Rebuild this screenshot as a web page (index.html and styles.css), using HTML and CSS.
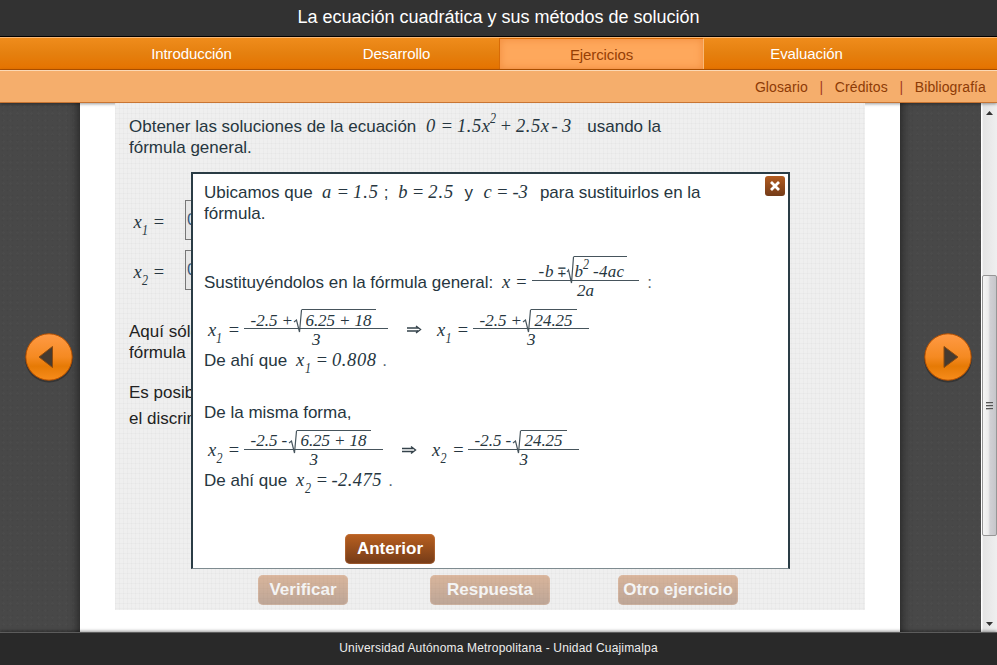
FILE: index.html
```html
<!DOCTYPE html>
<html lang="es">
<head>
<meta charset="utf-8">
<title>La ecuación cuadrática y sus métodos de solución</title>
<link rel="stylesheet" href="styles.css">
</head>
<body>
<header class="title">La ecuación cuadrática y sus métodos de solución</header>
<nav class="tabs">
  <a class="tab">Introducción</a><a class="tab">Desarrollo</a><a class="tab active">Ejercicios</a><a class="tab">Evaluación</a>
</nav>
<div class="links"><a>Glosario</a><i>|</i><a>Créditos</a><i>|</i><a>Bibliografía</a></div>

<main class="stage">
  <aside class="side left">
    <svg class="arrow" width="52" height="54" viewBox="0 0 52 54">
      <defs><linearGradient id="or" x1="0" y1="0" x2="0" y2="1"><stop offset="0" stop-color="#ff9a45"/><stop offset=".5" stop-color="#f58a22"/><stop offset=".7" stop-color="#e67a05"/><stop offset="1" stop-color="#f78c1c"/></linearGradient></defs>
      <circle cx="26" cy="27.500" r="24" fill="#222" opacity=".5"/><circle cx="26" cy="26" r="23.2" fill="url(#or)" stroke="#b65000"/>
      <path d="M16 26 L29.500 15.500 V36.500 Z" fill="#453a30" stroke="#8a4a10" stroke-width="1" stroke-linejoin="round"/>
    </svg>
  </aside>
  <section class="paper">
    <div class="panel">
      <div class="row q1"><span>Obtener las soluciones de la ecuación</span>
        <svg class="m" width="171" height="16" viewBox="416 -16 171 16"><text x="426" y="0" textLength="9">0</text><text x="440.500" y="0" textLength="12">=</text><text x="457" y="0" textLength="33">1.5x</text><text class="s" x="490" y="-9" textLength="6" lengthAdjust="spacingAndGlyphs">2</text><text x="499.500" y="0" textLength="12">+</text><text x="516" y="0" textLength="33">2.5x</text><text x="551.500" y="0">-</text><text x="562" y="0">3</text></svg>
        <span>usando la</span></div>
      <div class="row">fórmula general.</div>
      <div class="row v1"><svg class="m" width="55" height="16" viewBox="129 -16 55 16"><text x="133.500" y="0">x</text><text class="s" x="142" y="7" textLength="6" lengthAdjust="spacingAndGlyphs">1</text><text x="152.500" y="0" textLength="12">=</text></svg><div class="field">0</div></div>
      <div class="row v2"><svg class="m" width="55" height="16" viewBox="129 -16 55 16"><text x="133.500" y="0">x</text><text class="s" x="142" y="7" textLength="6" lengthAdjust="spacingAndGlyphs">2</text><text x="152.500" y="0" textLength="12">=</text></svg><div class="field">0</div></div>
      <div class="row dark n1">Aquí sólo</div>
      <div class="row dark">fórmula</div>
      <div class="row dark n2">Es posible</div>
      <div class="row dark n3">el discrimi</div>
      <div class="actions"><a class="btn w90">Verificar</a><a class="btn w120 b2">Respuesta</a><a class="btn w120 b3">Otro ejercicio</a></div>

      <div class="modal">
        <div class="close"><svg width="20" height="20" viewBox="0 0 20 20"><path d="M6 6 L14 14 M14 6 L6 14" stroke="#fff" stroke-width="2.800"/></svg></div>
        <div class="row"><span>Ubicamos que</span>
          <svg class="m" width="71" height="16" viewBox="312 -16 71 16"><text x="321" y="0">a</text><text x="335.500" y="0" textLength="12">=</text><text x="352" y="0" textLength="25">1.5</text></svg>
          <span>;</span>
          <svg class="m" width="76" height="16" viewBox="387.700 -16 76 16"><text x="398" y="0">b</text><text x="411.500" y="0" textLength="12">=</text><text x="428" y="0" textLength="25">2.5</text></svg>
          <span>y</span>
          <svg class="m" width="67" height="16" viewBox="472.500 -16 67 16"><text x="483" y="0">c</text><text x="495.500" y="0" textLength="12">=</text><text x="512" y="0">-</text><text x="518" y="0">3</text></svg>
          <span>para sustituirlos en la</span></div>
        <div class="row">fórmula.</div>
        <div class="row g3"><span>Sustituyéndolos en la fórmula general:</span>
          <svg class="m" width="154" height="16" viewBox="493 -16 154 16">
            <text x="502" y="0">x</text><text x="515" y="0" textLength="12">=</text>
            <g class="f"><text x="538.500" y="-11" textLength="15">-b</text><text x="556.500" y="-11" class="r" textLength="10" lengthAdjust="spacingAndGlyphs">∓</text><text x="574.500" y="-11">b</text><text class="s" x="583" y="-19" textLength="6" lengthAdjust="spacingAndGlyphs">2</text><text x="593" y="-11" textLength="31">-4ac</text><text x="577" y="8" textLength="17">2a</text></g>
            <path d="M532 -7.500 H639 M573.500 -31.500 H627"/><path d="M567 -16 L568.500 -18 L571.500 -5 L573.500 -31"/></svg>
          <span class="light">:</span></div>
        <div class="row g4">
          <svg class="m" width="400" height="16" viewBox="204 -16 400 16">
            <text x="208" y="0">x</text><text class="s" x="216" y="7" textLength="6" lengthAdjust="spacingAndGlyphs">1</text><text x="227.500" y="0" textLength="12">=</text>
            <g class="f"><text x="250.500" y="-10" textLength="27">-2.5</text><text x="281.500" y="-10" textLength="11">+</text><text x="305.500" y="-10" textLength="66">6.25 + 18</text><text x="312" y="9">3</text></g>
            <path d="M244 -7.500 H388 M301.500 -26.500 H376"/><path d="M294 -14 L296.500 -16 L299.500 -4 L301.500 -26"/>
            <path class="imp" d="M407 -8 H418 M407 -5 H418 M416 -10 L420.500 -6.500 L416 -3"/>
            <text x="437" y="0">x</text><text class="s" x="445.500" y="7" textLength="6" lengthAdjust="spacingAndGlyphs">1</text><text x="456.500" y="0" textLength="12">=</text>
            <g class="f"><text x="479.500" y="-10" textLength="27">-2.5</text><text x="510.500" y="-10" textLength="11">+</text><text x="534.500" y="-10" textLength="38">24.25</text><text x="527" y="9">3</text></g>
            <path d="M473 -7.500 H589 M530.500 -26.500 H577"/><path d="M523 -14 L525.500 -16 L528.500 -4 L530.500 -26"/></svg></div>
        <div class="row g5"><span>De ahí que</span>
          <svg class="m" width="95" height="16" viewBox="287 -16 95 16"><text x="296" y="0">x</text><text class="s" x="305" y="7" textLength="6" lengthAdjust="spacingAndGlyphs">1</text><text x="315.500" y="0" textLength="12">=</text><text x="332" y="0" textLength="44">0.808</text></svg>
          <span class="light">.</span></div>
        <div class="row g6">De la misma forma,</div>
        <div class="row g7">
          <svg class="m" width="400" height="16" viewBox="204 -16 400 16">
            <text x="208" y="0">x</text><text class="s" x="216.500" y="7" textLength="6" lengthAdjust="spacingAndGlyphs">2</text><text x="227.500" y="0" textLength="12">=</text>
            <g class="f"><text x="250.500" y="-10" textLength="27">-2.5</text><text x="281.500" y="-10">-</text><text x="300.500" y="-10" textLength="66">6.25 + 18</text><text x="309.500" y="9">3</text></g>
            <path d="M244 -6.500 H383 M296.500 -25.500 H371"/><path d="M289 -13 L291.500 -15 L294.500 -3 L296.500 -25"/>
            <path class="imp" d="M402 -7.500 H413 M402 -4.500 H413 M411 -9.500 L415.500 -6 L411 -2.500"/>
            <text x="432" y="0">x</text><text class="s" x="440.500" y="7" textLength="6" lengthAdjust="spacingAndGlyphs">2</text><text x="452" y="0" textLength="12">=</text>
            <g class="f"><text x="474.500" y="-10" textLength="27">-2.5</text><text x="505.500" y="-10">-</text><text x="524.500" y="-10" textLength="38">24.25</text><text x="519.500" y="9">3</text></g>
            <path d="M468 -6.500 H579 M520.500 -25.500 H567"/><path d="M513 -13 L515.500 -15 L518.500 -3 L520.500 -25"/></svg></div>
        <div class="row g8"><span>De ahí que</span>
          <svg class="m" width="101" height="16" viewBox="287 -16 101 16"><text x="296" y="0">x</text><text class="s" x="305" y="7" textLength="6" lengthAdjust="spacingAndGlyphs">2</text><text x="315.500" y="0" textLength="12">=</text><text x="331.500" y="0" textLength="50">-2.475</text></svg>
          <span class="light">.</span></div>
        <a class="btn w90 prev">Anterior</a>
      </div>
    </div>
  </section>
  <aside class="side right">
    <svg class="arrow" width="52" height="54" viewBox="0 0 52 54">
      <circle cx="26" cy="27.500" r="24" fill="#222" opacity=".5"/><circle cx="26" cy="26" r="23.200" fill="url(#or)" stroke="#b65000"/>
      <path d="M36 26 L22 15.500 V36.500 Z" fill="#453a30" stroke="#8a4a10" stroke-width="1" stroke-linejoin="round"/>
    </svg>
  </aside>
  <div class="scroll">
    <svg width="7" height="4" viewBox="0 0 7 4"><path d="M0 4 L3.500 0 L7 4Z" fill="#333"/></svg>
    <div class="thumb"><b></b><b></b><b></b></div>
    <svg class="down" width="7" height="4" viewBox="0 0 7 4"><path d="M0 0 L3.500 4 L7 0Z" fill="#333"/></svg>
  </div>
</main>
<footer class="foot">Universidad Autónoma Metropolitana - Unidad Cuajimalpa</footer>
</body>
</html>
```
FILE: styles.css
```css
* { box-sizing: border-box; }
body { margin: 0; width: 997px; height: 665px; overflow: hidden; display: flex; flex-direction: column; font-family: "Liberation Sans", Arial, sans-serif; background: #292929; }
.title { height: 37px; background: #323232; border-bottom: 1px solid #000; color: #fff; font-size: 18px; line-height: 34px; text-align: center; }
.tabs { height: 33px; display: flex; padding-left: 89px; background: linear-gradient(#ef8c1c, #e5800f 50%, #e57300); border-top: 1px solid #f9b877; border-bottom: 1px solid #b65400; }
.tab { width: 205px; text-align: center; color: #fff; font-size: 15px; letter-spacing: -.1px; line-height: 32px; }
.tab.active { background: #fea85c; color: #963f05; border: 1px solid #d86b06; border-bottom-width: 0; border-right-color: #f9b877; box-shadow: inset 0 0 8px #f28c3d; line-height: 31px; }
.links { height: 33px; display: flex; justify-content: flex-end; padding-right: 11px; background: #f5ae6c; border-top: 1px solid #fcd9b5; border-bottom: 1px solid #c87533; color: #8d3b06; font-size: 14px; letter-spacing: .1px; line-height: 32px; position: relative; box-shadow: 0 1px 3px rgba(0,0,0,.4); }
.links i { font-style: normal; width: 27px; text-align: center; color: #a43a20; }
.stage { height: 529px; display: flex; }
.side { display: flex; flex-direction: column; background-color: #484848; background-image: radial-gradient(#454545 25%, transparent 30%), radial-gradient(#4b4b4b 25%, transparent 30%); background-size: 5px 5px, 7px 7px; padding-top: 228px; }
.left { width: 80px; padding-left: 23px; box-shadow: inset -10px 0 10px -8px #252525; }
.right { width: 81px; padding-left: 22px; box-shadow: inset 10px 0 10px -8px #252525; }
.arrow { display: block; }
.paper { width: 820px; background: #fff; padding: 0 35px; }
.panel { position: relative; height: 507px; padding: 13px 0 0 14px; background-color: #efefef; background-image: repeating-linear-gradient(90deg, rgba(0,0,0,.018) 0 1px, transparent 1px 4px), repeating-linear-gradient(rgba(0,0,0,.018) 0 1px, transparent 1px 5px); overflow: hidden; }
.row { display: flex; align-items: baseline; height: 21px; line-height: 21px; font-size: 17px; color: #263640; white-space: pre; }
.dark { color: #222; }
.light { color: #59656c; }
.m { overflow: visible; flex: none; fill: #263640; font-family: "Liberation Serif", "Times New Roman", serif; font-style: italic; font-size: 18.5px; }
.m .f { font-size: 17px; }
.m .s { font-size: 15px; }
.m .r { font-style: normal; font-size: 15px; }
.m path { fill: none; stroke: #46545c; stroke-width: 1.2; }
.m .imp { stroke: #35434b; stroke-width: 1.4; }
.v1 { margin-top: 54px; align-items: flex-start; }
.v2 { margin-top: 29px; align-items: flex-start; }
.field { width: 120px; height: 40px; margin: -12px 0 0 1px; border: 1px solid #777; background: #e7e7e7; line-height: 38px; padding-left: 1px; color: #3d5c80; }
.n1 { margin-top: 38px; }
.n2 { margin-top: 19px; }
.n3 { margin-top: 5px; }
.actions { display: flex; margin: 146px 0 0 129px; opacity: .4; }
.btn { display: block; height: 30px; border-radius: 5px; background: linear-gradient(#b96020, #743b18); box-shadow: inset 0 0 1px 1px rgba(205,125,70,.45); color: #fff; font-weight: bold; font-size: 17px; line-height: 29px; text-align: center; }
.w90 { width: 90px; }
.w120 { width: 120px; }
.b2 { margin-left: 82px; }
.b3 { margin-left: 68px; }
.modal { position: absolute; left: 76px; top: 69px; width: 599px; height: 397px; padding: 8px 0 0 11px; background: #fff; border: 2px solid #2a3c45; border-bottom: 1px solid #7e8b90; }
.close { position: absolute; right: 3px; top: 2px; width: 20px; height: 20px; border-radius: 3px; background: linear-gradient(#b35c20, #743b18); }
.close svg { display: block; }
.g3 { margin-top: 48px; }
.g4 { margin-top: 27px; }
.g5 { margin-top: 9px; }
.g6 { margin-top: 31px; }
.g7 { margin-top: 17px; }
.g8 { margin-top: 9px; }
.prev { margin: 43px 0 0 141px; }
.scroll { width: 16px; display: flex; flex-direction: column; align-items: center; padding: 8px 0 6px 1px; background: linear-gradient(90deg, #fff 0 1px, #e4e4e4 2px, #efefef); }
.scroll .down { margin-top: auto; }
.thumb { width: 15px; height: 261px; flex: none; margin-top: 160px; border: 1px solid #969696; border-radius: 2px; background: linear-gradient(90deg, #f5f5f5, #ececec 40%, #d0d0d4 55%, #c6c6ca); display: flex; flex-direction: column; align-items: center; justify-content: center; gap: 1px; }
.thumb b { width: 7px; height: 2px; background: #555; border-bottom: 1px solid #bbb; }
.foot { height: 33px; background: #292929; border-top: 1px solid #5c5c5c; box-shadow: 0 -1px 3px rgba(0,0,0,.4); position: relative; color: #eee; font-size: 12px; letter-spacing: .18px; line-height: 31px; text-align: center; }
```
